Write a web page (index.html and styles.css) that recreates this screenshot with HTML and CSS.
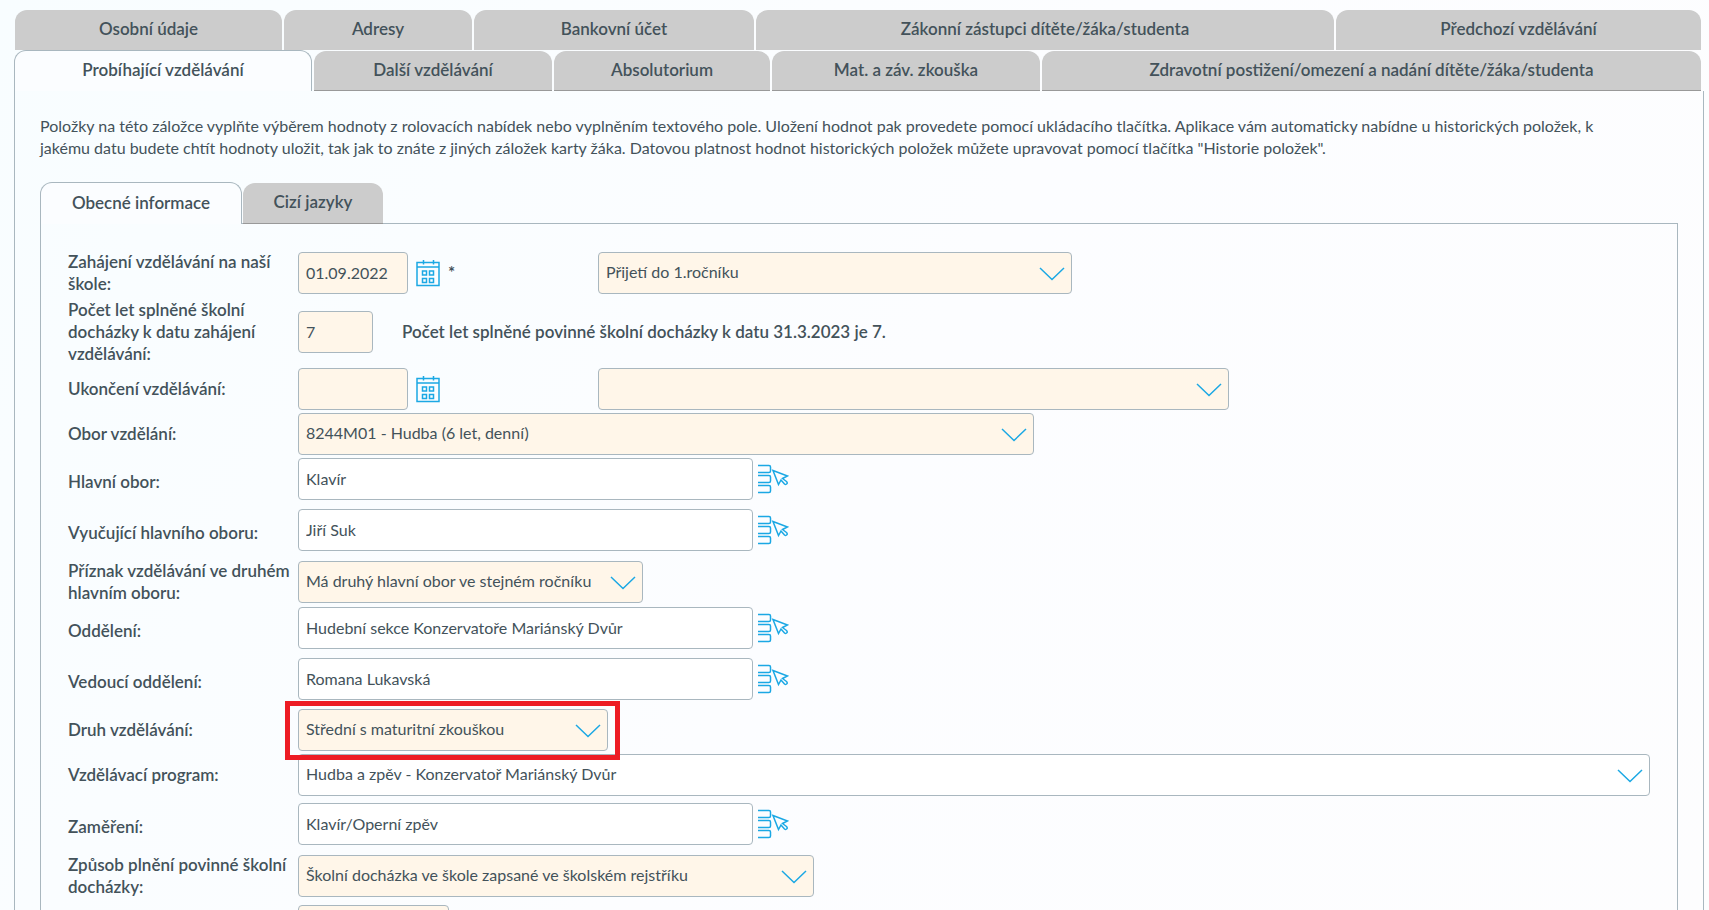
FILE: index.html
```html
<!DOCTYPE html>
<html lang="cs">
<head>
<meta charset="utf-8">
<title>Probíhající vzdělávání</title>
<link rel="stylesheet" href="styles.css">
</head>
<body>
<svg class="sprite" aria-hidden="true">
  <symbol id="chevron" viewBox="0 0 26 14"><path d="M1 1 L13 12.500 L25 1"/></symbol>
  <symbol id="calendar" viewBox="0 0 24 28">
    <path d="M1 3.500H23V26.500H1ZM1 8H23M7.500 1V5.500M17.500 1V5.500"/>
    <path d="M6.500 12H10.500V16H6.500ZM13.500 12H17.500V16H13.500ZM6.500 19.500H10.500V23.500H6.500ZM13.500 19.500H17.500V23.500H13.500Z"/>
  </symbol>
  <symbol id="picker" viewBox="0 0 32 30">
    <path d="M1 1.500H12Q13.500 1.500 13.500 3V7Q13.500 8.500 12 8.500H1M1 11.500H12Q13.500 11.500 13.500 13V17Q13.500 18.500 12 18.500H1M1 21.500H12Q13.500 21.500 13.500 23V27Q13.500 28.500 12 28.500H1"/>
    <path d="M16 6.500L30.500 12L25.500 14.500L29.500 17.500Q31 19 29.500 20Q28.500 20.800 27.500 20L24 16L21.500 20.500Z"/>
  </symbol>
</svg>
<main class="page">
  <div class="tabs tabs-upper" role="tablist">
    <button class="tab" role="tab" style="flex-grow:267">Osobní údaje</button>
    <button class="tab" role="tab" style="flex-grow:188">Adresy</button>
    <button class="tab" role="tab" style="flex-grow:280">Bankovní účet</button>
    <button class="tab" role="tab" style="flex-grow:578">Zákonní zástupci dítěte/žáka/studenta</button>
    <button class="tab" role="tab" style="flex-grow:365">Předchozí vzdělávání</button>
  </div>
  <div class="tabs tabs-lower" role="tablist">
    <button class="tab active" role="tab" aria-selected="true" style="flex-grow:296">Probíhající vzdělávání</button>
    <button class="tab" role="tab" style="flex-grow:238">Další vzdělávání</button>
    <button class="tab" role="tab" style="flex-grow:216">Absolutorium</button>
    <button class="tab" role="tab" style="flex-grow:268">Mat. a záv. zkouška</button>
    <button class="tab" role="tab" style="flex-grow:659">Zdravotní postižení/omezení a nadání dítěte/žáka/studenta</button>
  </div>
  <section class="panel">
    <p class="intro">Položky na této záložce vyplňte výběrem hodnoty z rolovacích nabídek nebo vyplněním textového pole. Uložení hodnot pak provedete pomocí ukládacího tlačítka. Aplikace vám automaticky nabídne u historických položek, k jakému datu budete chtít hodnoty uložit, tak jak to znáte z jiných záložek karty žáka. Datovou platnost hodnot historických položek můžete upravovat pomocí tlačítka "Historie položek".</p>
    <div class="tabs tabs-inner" role="tablist">
      <button class="tab active" role="tab" aria-selected="true">Obecné informace</button>
      <button class="tab" role="tab">Cizí jazyky</button>
    </div>
    <form class="form">
      <div class="row first">
        <label for="start">Zahájení vzdělávání na naší škole:</label>
        <div class="field">
          <input class="control warm w-date" id="start" value="01.09.2022">
          <button class="icon-btn" type="button" aria-label="Kalendář"><svg class="icon cal"><use href="#calendar"/></svg></button>
          <span class="star">*</span>
          <span class="select w-entry"><select class="control warm" aria-label="Zahájení"><option>Přijetí do 1.ročníku</option></select><svg class="chevron"><use href="#chevron"/></svg></span>
        </div>
      </div>
      <div class="row">
        <label for="years">Počet let splněné školní docházky k datu zahájení vzdělávání:</label>
        <div class="field">
          <input class="control warm w-years" id="years" value="7">
          <span class="note">Počet let splněné povinné školní docházky k datu 31.3.2023 je 7.</span>
        </div>
      </div>
      <div class="row">
        <label for="end">Ukončení vzdělávání:</label>
        <div class="field">
          <input class="control warm w-date" id="end">
          <button class="icon-btn" type="button" aria-label="Kalendář"><svg class="icon cal"><use href="#calendar"/></svg></button>
          <span class="star"></span>
          <span class="select w-exit"><select class="control warm" aria-label="Ukončení"><option></option></select><svg class="chevron"><use href="#chevron"/></svg></span>
        </div>
      </div>
      <div class="row">
        <label for="branch">Obor vzdělání:</label>
        <div class="field"><span class="select w-branch"><select class="control warm" id="branch"><option>8244M01 - Hudba (6 let, denní)</option></select><svg class="chevron"><use href="#chevron"/></svg></span></div>
      </div>
      <div class="row">
        <label for="major">Hlavní obor:</label>
        <div class="field pick"><input class="control w-text" id="major" value="Klavír"><button class="icon-btn" type="button" aria-label="Vybrat"><svg class="icon list"><use href="#picker"/></svg></button></div>
      </div>
      <div class="row">
        <label for="teacher">Vyučující hlavního oboru:</label>
        <div class="field pick"><input class="control w-text" id="teacher" value="Jiří Suk"><button class="icon-btn" type="button" aria-label="Vybrat"><svg class="icon list"><use href="#picker"/></svg></button></div>
      </div>
      <div class="row">
        <label for="second">Příznak vzdělávání ve druhém hlavním oboru:</label>
        <div class="field"><span class="select w-second"><select class="control warm" id="second"><option>Má druhý hlavní obor ve stejném ročníku</option></select><svg class="chevron"><use href="#chevron"/></svg></span></div>
      </div>
      <div class="row">
        <label for="dept">Oddělení:</label>
        <div class="field pick"><input class="control w-text" id="dept" value="Hudební sekce Konzervatoře Mariánský Dvůr"><button class="icon-btn" type="button" aria-label="Vybrat"><svg class="icon list"><use href="#picker"/></svg></button></div>
      </div>
      <div class="row">
        <label for="head">Vedoucí oddělení:</label>
        <div class="field pick"><input class="control w-text" id="head" value="Romana Lukavská"><button class="icon-btn" type="button" aria-label="Vybrat"><svg class="icon list"><use href="#picker"/></svg></button></div>
      </div>
      <div class="row">
        <label for="kind">Druh vzdělávání:</label>
        <div class="field"><span class="select w-kind marked"><select class="control warm" id="kind"><option>Střední s maturitní zkouškou</option></select><svg class="chevron"><use href="#chevron"/></svg></span></div>
      </div>
      <div class="row">
        <label for="program">Vzdělávací program:</label>
        <div class="field"><span class="select w-full"><select class="control" id="program"><option>Hudba a zpěv - Konzervatoř Mariánský Dvůr</option></select><svg class="chevron"><use href="#chevron"/></svg></span></div>
      </div>
      <div class="row spaced">
        <label for="focus">Zaměření:</label>
        <div class="field pick"><input class="control w-text" id="focus" value="Klavír/Operní zpěv"><button class="icon-btn" type="button" aria-label="Vybrat"><svg class="icon list"><use href="#picker"/></svg></button></div>
      </div>
      <div class="row">
        <label for="mode">Způsob plnění povinné školní docházky:</label>
        <div class="field"><span class="select w-mode"><select class="control warm" id="mode"><option>Školní docházka ve škole zapsané ve školském rejstříku</option></select><svg class="chevron"><use href="#chevron"/></svg></span></div>
      </div>
      <div class="row spaced">
        <span></span>
        <div class="field"><input class="control warm w-last" aria-label="Ročník"></div>
      </div>
    </form>
  </section>
</main>
</body>
</html>
```
FILE: styles.css
```css
* { box-sizing: border-box; }
html { overflow: hidden; }
body {
  margin: 0;
  min-height: 100vh;
  background: linear-gradient(120deg, #f8fdff, #fcfdff 50%, #fdfdfe);
  color: #43525a;
  font: 16px/22px Lato, "Open Sans", sans-serif;
}
button, input, select { font: inherit; color: inherit; }
.sprite { display: none; }
.page { padding: 10px 5px 0 14px; }
.tabs { display: flex; align-items: flex-end; }
.tabs-upper { gap: 2px; padding: 0 3px 0 1px; }
.tabs-lower { gap: 2px; padding-right: 3px; }
.tab {
  flex: 1 1 0;
  height: 40px;
  padding: 0 0 2px;
  border: 0;
  border-radius: 12px 12px 0 0;
  background: #ccc;
  font-size: 17px;
  font-weight: 600;
  white-space: nowrap;
}
.tabs-lower .tab, .tabs-inner .tab { border-bottom: 1px solid #999; }
.tabs .tab.active {
  height: 41px;
  border: 1px solid #a9b7bf;
  border-bottom: 0;
  background: #fbfdff;
}
.panel {
  padding: 24px 25px 0;
  border: solid #a9b7bf;
  border-width: 0 1px;
}
.intro { margin: 0 0 23px; padding-right: 40px; }
.tabs-inner { gap: 1px; position: relative; margin-bottom: -1px; }
.tabs-inner .tab { flex: none; width: 140px; height: 41px; }
.tabs-inner .tab.active { width: 202px; height: 42px; }
.form {
  display: grid;
  gap: 3px;
  padding: 27px 27px 20px 27px;
  border: 1px solid #a9b7bf;
}
.row {
  display: grid;
  grid-template-columns: 230px 1fr;
  align-items: center;
}
.row label, .note { font-size: 17px; font-weight: 600; }
.first { padding-bottom: 1px; }
.spaced { padding-top: 4px; }
.field { display: flex; align-items: center; }
.pick { padding-bottom: 6px; }
.control {
  height: 42px;
  padding: 0 7px 2px;
  border: 1px solid #a9b7bf;
  border-radius: 4px;
  background: #fff;
  appearance: none;
}
.warm { background: #fff6e9; }
.select { position: relative; display: block; }
.select .control { display: block; width: 100%; }
.chevron {
  position: absolute;
  right: 7px;
  top: 15px;
  width: 26px;
  height: 14px;
  pointer-events: none;
}
.chevron, .icon { fill: none; stroke: #1ba8e4; stroke-width: 1.5; }
.icon { display: block; }
.cal { width: 24px; height: 28px; }
.list { width: 32px; height: 30px; }
.icon-btn { padding: 0; border: 0; background: none; }
.w-date + .icon-btn { margin-left: 8px; }
.w-text + .icon-btn { margin-left: 4px; }
.star { width: 150px; margin-left: 8px; font-size: 17px; font-weight: 600; }
.note { margin-left: 29px; }
.w-date { width: 110px; }
.w-years { width: 75px; }
.w-entry { width: 474px; }
.w-exit { width: 631px; }
.w-branch { width: 736px; }
.w-text { width: 455px; }
.w-second { width: 345px; }
.w-kind { width: 310px; }
.w-full { width: 100%; }
.w-mode { width: 516px; }
.w-last { width: 151px; }
.marked::after {
  content: "";
  position: absolute;
  inset: -8px -12px -9px -13px;
  border: 5px solid #ed1c24;
  pointer-events: none;
}
.marked { z-index: 1; }
```
